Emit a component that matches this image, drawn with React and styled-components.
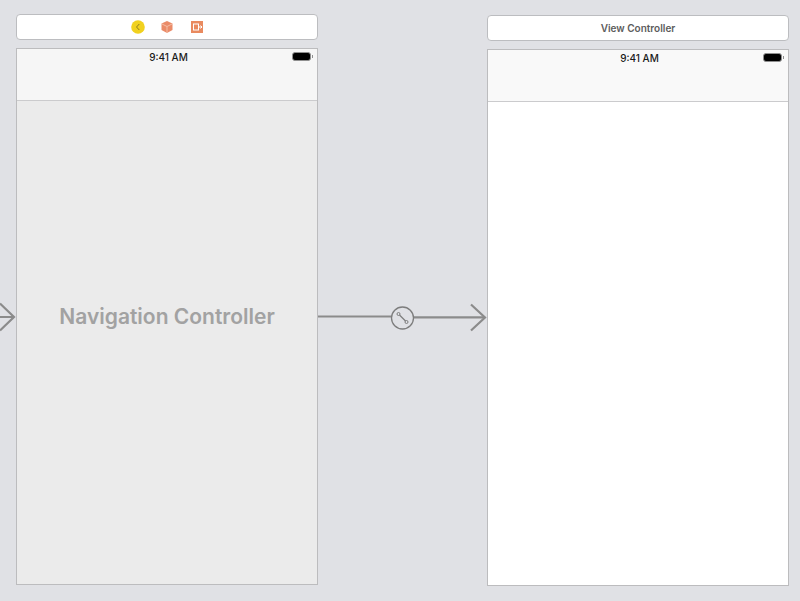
import React from "react";
import styled, { createGlobalStyle } from "styled-components";

const GlobalStyle = createGlobalStyle`
  html, body {
    margin: 0;
    padding: 0;
    background: #e0e1e5;
  }
`;

const Canvas = styled.div`
  position: relative;
  width: 800px;
  height: 601px;
  overflow: hidden;
  display: flex;
  padding: 14px 11px 0 16px;
  box-sizing: border-box;
  background: #e0e1e5;
  font-family: Inter, "Liberation Sans", sans-serif;
`;

const Column = styled.div`
  width: 302px;
  height: 571px;
  flex: none;
  display: flex;
  flex-direction: column;
  gap: 8px;
  margin-top: ${({ $offset }) => $offset || 0}px;
`;

const TitleBar = styled.div`
  height: 26px;
  flex: none;
  box-sizing: border-box;
  display: flex;
  align-items: center;
  justify-content: center;
  gap: 15.5px;
  background: #fff;
  border: 1px solid #bcbdc0;
  border-radius: 4px;
  color: #5c5c5c;
  font-size: 10px;
  font-weight: 600;
`;

const Scene = styled.div`
  flex: 1;
  display: flex;
  flex-direction: column;
  box-sizing: border-box;
  background: ${({ $body }) => $body};
  border: 1px solid #bcbcbe;
`;

const TopBar = styled.div`
  height: 52px;
  flex: none;
  position: relative;
  display: flex;
  justify-content: center;
  box-sizing: border-box;
  padding: 2px 0 0 3px;
  background: ${({ $bar }) => $bar};
  border-bottom: 1px solid #cbcbcd;
`;

const Time = styled.span`
  font-size: 10px;
  line-height: 13px;
  font-weight: 500;
  color: #1a1a1a;
`;

const Battery = styled.div`
  position: absolute;
  top: 3px;
  right: 6px;
  width: 19px;
  height: 9px;
  box-sizing: border-box;
  background: #000;
  border: 1.5px solid #8f8f8f;
  border-radius: 3px;

  &::after {
    content: "";
    position: absolute;
    top: 1.5px;
    right: -3px;
    width: 1px;
    height: 3px;
    background: #8f8f8f;
  }
`;

const SceneBody = styled.div`
  flex: 1;
  display: flex;
  align-items: center;
  justify-content: center;
  padding-bottom: 52px;
  color: #a2a2a2;
  font-size: 21px;
  font-weight: 600;
`;

const Connector = styled.svg`
  flex: 1;
  height: 601px;
  margin-top: -14px;
  min-width: 0;
`;

const EntryArrow = styled.svg`
  position: absolute;
  left: 0;
  top: 300px;
`;

const Glyph = styled.svg`
  display: block;
  flex: none;
`;

const ExitIcon = () => (
  <Glyph width="14" height="14" viewBox="0 0 14 14">
    <rect x="1" y="1" width="12" height="12" fill="#e98a5f" />
    <rect x="3.500" y="4" width="5" height="6" fill="none" stroke="#fff" strokeWidth="1" />
    <path d="M8 7h4M10.500 5.500 12 7l-1.500 1.500" fill="none" stroke="#fff" strokeWidth="1" />
  </Glyph>
);

const CubeIcon = () => (
  <Glyph width="14" height="14" viewBox="0 0 14 14">
    <path d="M7 1l5.500 2.500v6.500L7 13 1.500 10V3.500z" fill="#ea8b68" />
    <path d="M2 4l5 2.500L12 4M7 6.500V13" fill="none" stroke="#f6c9b4" strokeWidth="0.8" />
  </Glyph>
);

const BackIcon = () => (
  <Glyph width="14" height="14" viewBox="0 0 14 14">
    <circle cx="7" cy="7" r="6.800" fill="#f1d11f" />
    <path d="M8.300 4 5.500 7l2.800 3" fill="none" stroke="#8f7d1c" strokeWidth="1" />
  </Glyph>
);

const Phone = ({ body, bar, children }) => (
  <Scene $body={body}>
    <TopBar $bar={bar}>
      <Time>9:41 AM</Time>
      <Battery />
    </TopBar>
    <SceneBody>{children}</SceneBody>
  </Scene>
);

export default function App() {
  return (
    <Canvas>
      <GlobalStyle />
      <EntryArrow width="16" height="34" viewBox="0 0 16 34">
        <path
          d="M0 17h14M0 3.500 14 17 0 30.500"
          fill="none"
          stroke="#8b8b8b"
          strokeWidth="2.200"
        />
      </EntryArrow>
      <Column>
        <TitleBar>
          <BackIcon />
          <CubeIcon />
          <ExitIcon />
        </TitleBar>
        <Phone body="#ebebeb" bar="#f6f6f6">
          Navigation Controller
        </Phone>
      </Column>
      <Connector viewBox="0 0 169 601">
        <path d="M0 316.500H73" fill="none" stroke="#8b8b8b" strokeWidth="2.200" />
        <path d="M96 317.300H167" fill="none" stroke="#8b8b8b" strokeWidth="2.200" />
        <path d="M153 304.500 167 317.500 153 330.500" fill="none" stroke="#8b8b8b" strokeWidth="2.200" />
        <circle cx="84.500" cy="318" r="11" fill="none" stroke="#7d7d7d" strokeWidth="1.300" />
        <path d="M80.500 314 88.500 322" fill="none" stroke="#7d7d7d" strokeWidth="1.200" />
        <circle cx="80.500" cy="314" r="1.500" fill="#e0e1e5" stroke="#7d7d7d" strokeWidth="1" />
        <circle cx="88.500" cy="322" r="1.500" fill="#e0e1e5" stroke="#7d7d7d" strokeWidth="1" />
      </Connector>
      <Column $offset={1}>
        <TitleBar>View Controller</TitleBar>
        <Phone body="#ffffff" bar="#f9f9f9" />
      </Column>
    </Canvas>
  );
}
